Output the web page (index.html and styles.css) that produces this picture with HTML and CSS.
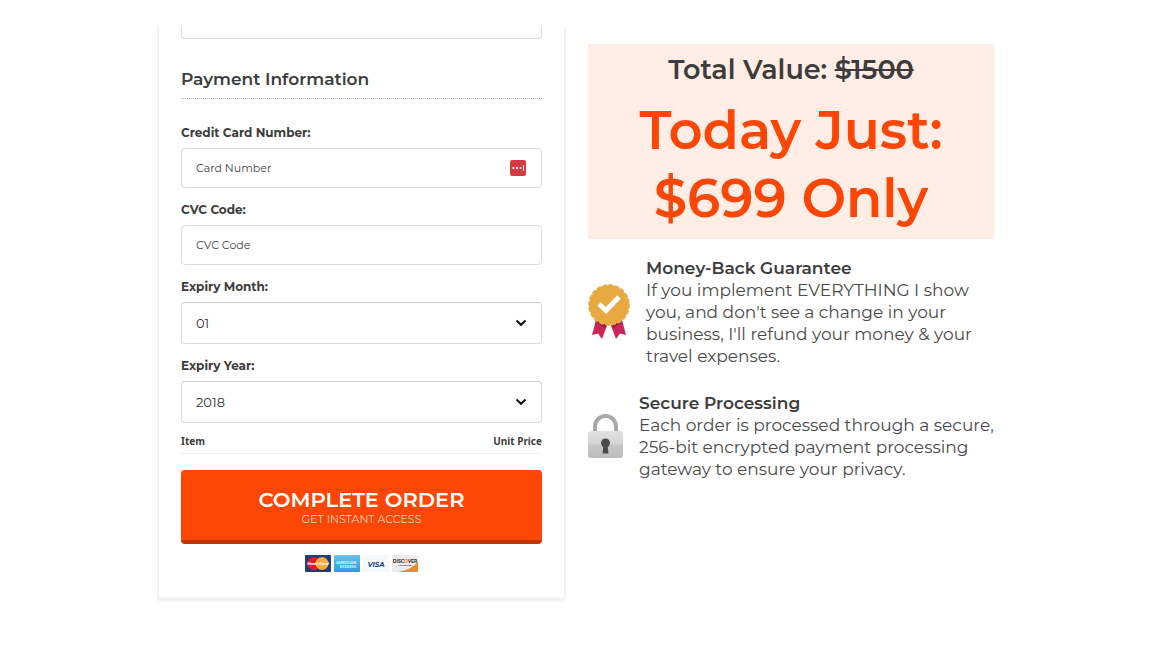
FILE: index.html
```html
<!DOCTYPE html>
<html lang="en">
  <head>
    <meta charset="UTF-8" />
    <meta name="viewport" content="width=device-width, initial-scale=1.0" />
    <title>Complete Order</title>
    <link rel="stylesheet" href="styles.css">
  </head>

  <body>
    <div class="container">
      <form class="card">
        <input type="text" class="prev_input" aria-label="Address" />
        <h2>Payment Information</h2>

        <div class="field">
          <label for="card">Credit Card Number:</label>
          <div class="control">
            <input type="text" id="card" placeholder="Card Number" />
            <svg class="pass_icon" viewBox="0 0 16 16">
              <rect width="16" height="16" rx="2" fill="#d33a42"/>
              <g fill="#fff">
                <circle cx="3.4" cy="8" r="1.1"/>
                <circle cx="7" cy="8" r="1.1"/>
                <circle cx="10.6" cy="8" r="1.1"/>
                <rect x="13" y="5" width="1" height="6"/>
              </g>
            </svg>
          </div>
        </div>

        <div class="field">
          <label for="cvc">CVC Code:</label>
          <input type="text" id="cvc" placeholder="CVC Code" />
        </div>

        <div class="field">
          <label for="month">Expiry Month:</label>
          <div class="control">
            <select id="month">
              <option>01</option>
              <option>02</option>
              <option>03</option>
            </select>
            <svg class="arrow" viewBox="0 0 12 8"><path d="M1.500 1.500L6 5.800L10.500 1.500" fill="none" stroke="#111" stroke-width="2"/></svg>
          </div>
        </div>

        <div class="field">
          <label for="year">Expiry Year:</label>
          <div class="control">
            <select id="year">
              <option>2018</option>
              <option>2019</option>
              <option>2020</option>
            </select>
            <svg class="arrow" viewBox="0 0 12 8"><path d="M1.500 1.500L6 5.800L10.500 1.500" fill="none" stroke="#111" stroke-width="2"/></svg>
          </div>
        </div>

        <table class="items">
          <tr>
            <th>Item</th>
            <th class="price">Unit Price</th>
          </tr>
        </table>

        <button type="submit" class="orderBtn">
          <span class="main">COMPLETE ORDER</span>
          <span class="sub">GET INSTANT ACCESS</span>
        </button>

        <div class="cards">
          <!-- mastercard -->
          <svg viewBox="0 0 26 17">
            <rect width="26" height="17" rx="1" fill="#253a78"/>
            <circle cx="9" cy="8.500" r="6.500" fill="#e01b2c"/>
            <circle cx="17" cy="8.500" r="6.500" fill="#f3ad3d"/>
            <text x="13" y="10" font-size="3.500" font-weight="700" font-style="italic" fill="#fff" text-anchor="middle">MasterCard</text>
          </svg>
          <!-- amex -->
          <svg viewBox="0 0 26 17">
            <defs>
              <linearGradient id="amex" x1="0" y1="0" x2="0" y2="1">
                <stop offset="0" stop-color="#6cc3ee"/>
                <stop offset="1" stop-color="#2e9bd8"/>
              </linearGradient>
            </defs>
            <rect width="26" height="17" rx="1" fill="url(#amex)"/>
            <text x="12" y="8.500" font-size="3.500" font-weight="700" fill="#d9f1fc" text-anchor="middle">AMERICAN</text>
            <text x="14" y="12.500" font-size="3.500" font-weight="700" fill="#d9f1fc" text-anchor="middle">EXPRESS</text>
          </svg>
          <!-- visa -->
          <svg viewBox="0 0 26 17">
            <rect width="26" height="17" rx="1" fill="#f6f9fc"/>
            <text x="13" y="11.500" font-size="7" font-weight="700" font-style="italic" fill="#1f4583" text-anchor="middle">VISA</text>
          </svg>
          <!-- discover -->
          <svg viewBox="0 0 26 17">
            <rect width="26" height="17" rx="1" fill="#ececec"/>
            <path d="M26 6.500C22 12 15 15.500 6 17H25q1 0 1-1Z" fill="#ef8a2c"/>
            <text x="13" y="7.500" font-size="4.500" font-weight="700" fill="#333" text-anchor="middle">DISC<tspan fill="#ef6a2c">O</tspan>VER</text>
            <text x="13" y="11" font-size="2.500" font-weight="700" fill="#444" text-anchor="middle">NETWORK</text>
          </svg>
        </div>
      </form>

      <div class="side">
        <div class="offer">
          <p class="total">Total Value: <del>$1500</del></p>
          <p class="today">Today Just:<br>$699 Only</p>
        </div>

        <div class="info">
          <svg class="badge" viewBox="0 0 42 56">
            <path d="M8 36L4 51L10 49.500L14 55L20 39Z" fill="#c92558"/>
            <path d="M34 36L38 51L32 49.500L28 55L22 39Z" fill="#c92558"/>
            <path d="M7 37L17 44L19 38ZM35 37L25 44L23 38Z" fill="#8f1b46"/>
            <circle cx="21" cy="21" r="19.500" fill="#e8a941"/>
            <circle cx="21" cy="21" r="19.300" fill="none" stroke="#e8a941" stroke-width="3" stroke-linecap="round" stroke-dasharray="2.500 3.563"/>
            <path d="M11 20L18 26.500L31 13" fill="none" stroke="#fff" stroke-width="5"/>
          </svg>
          <div class="text">
            <h3>Money-Back Guarantee</h3>
            <p>If you implement EVERYTHING I show<br>you, and don't see a change in your<br>business, I'll refund your money &amp; your<br>travel expenses.</p>
          </div>
        </div>

        <div class="info">
          <svg class="lock" viewBox="0 0 35 44">
            <defs>
              <linearGradient id="lockBody" x1="0" y1="0" x2="0" y2="1">
                <stop offset="0" stop-color="#e0e0e0"/>
                <stop offset=".45" stop-color="#d6d6d6"/>
                <stop offset=".55" stop-color="#c6c6c6"/>
                <stop offset="1" stop-color="#bdbdbd"/>
              </linearGradient>
            </defs>
            <path d="M7 18V12.500a10.500 10.500 0 0 1 21 0V18" fill="none" stroke="#a8a8a8" stroke-width="4"/>
            <rect y="17" width="35" height="27" rx="3" fill="url(#lockBody)"/>
            <circle cx="17.500" cy="29" r="4.500" fill="#4b4b4b"/>
            <path d="M15.500 31h4l1 8.500h-6Z" fill="#4b4b4b"/>
          </svg>
          <div class="text">
            <h3>Secure Processing</h3>
            <p>Each order is processed through a secure,<br>256-bit encrypted payment processing<br>gateway to ensure your privacy.</p>
          </div>
        </div>
      </div>
    </div>
  </body>
</html>
```

FILE: styles.css
```css
* {
  padding: 0;
  margin: 0;
  box-sizing: border-box;
}
body {
  background: #fff;
  color: #3c3c3c;
  font-family: Montserrat, Inter, sans-serif;
  padding: 27px 20px;
}
.container {
  max-width: 836px;
  margin: 0 auto;
  display: grid;
  grid-template-columns: minmax(0, 407px) 1fr;
  gap: 23px;
  align-items: start;
}

/* order form */
.card {
  padding: 0 22px 26px;
  border: 1px solid #eee;
  border-top: none;
  box-shadow: 0 2px 3px rgba(0, 0, 0, 0.07);
  clip-path: inset(0 -5px -8px -5px);
}
.card h2 {
  margin-top: 26px;
  margin-bottom: 23px;
  padding-bottom: 5px;
  font-size: 17px;
  line-height: 28px;
  font-weight: 600;
  border-bottom: 1px dotted #aaa;
}
.field {
  margin-bottom: 11px;
}
.field label {
  display: block;
  margin-bottom: 4px;
  font-size: 12px;
  line-height: 22px;
  font-weight: 700;
}
.control {
  position: relative;
}
input,
select {
  display: block;
  width: 100%;
  height: 40px;
  padding: 0 14px;
  color: #333;
  background: #fff;
  border: 1px solid #dcdcdc;
  border-radius: 4px;
  font-family: inherit;
  font-size: 11px;
  outline: none;
}
input::placeholder {
  color: #444;
  opacity: 1;
}
select {
  height: 42px;
  font-size: 13px;
  border-top-color: #ccc;
  appearance: none;
}
.prev_input {
  height: 12px;
  border-top: none;
  border-radius: 0 0 4px 4px;
}
.pass_icon {
  position: absolute;
  top: 12px;
  right: 16px;
  width: 16px;
  height: 16px;
}
.arrow {
  position: absolute;
  top: 17px;
  right: 15px;
  width: 12px;
  height: 8px;
  pointer-events: none;
}

.items {
  width: 100%;
  margin-top: -1px;
  border-collapse: collapse;
  border-bottom: 1px solid #eee;
  font-family: "Noto Sans", sans-serif;
  font-size: 10px;
  line-height: 16px;
}
.items th {
  padding-bottom: 4px;
  text-align: left;
}
.items .price {
  text-align: right;
}

.orderBtn {
  display: block;
  width: 100%;
  height: 74px;
  margin-top: 16px;
  padding-top: 4px;
  color: #fff;
  background: #fb4605;
  border: none;
  border-bottom: 4px solid #bf3604;
  border-radius: 4px;
  font-family: inherit;
  cursor: pointer;
}
.orderBtn span {
  display: block;
}
.orderBtn .main {
  font-size: 21px;
  line-height: 24px;
  font-weight: 600;
}
.orderBtn .sub {
  font-size: 11px;
  line-height: 14px;
  color: #ffd3c0;
}
.cards {
  display: flex;
  justify-content: center;
  gap: 3px;
  margin-top: 11px;
}
.cards svg {
  width: 26px;
  height: 17px;
}

/* right column */
.side {
  padding-top: 17px;
}
.offer {
  padding: 7px 0;
  margin-bottom: 18px;
  text-align: center;
  font-weight: 600;
  background: #ffede6;
}
.total {
  margin-bottom: 7px;
  font-size: 27px;
  line-height: 38px;
}
.today {
  font-size: 53px;
  line-height: 68px;
  color: #fb4605;
}
.info {
  display: flex;
  align-items: center;
  gap: 16px;
  margin-bottom: 25px;
}
.info svg {
  flex-shrink: 0;
}
.badge {
  width: 42px;
  height: 56px;
}
.lock {
  width: 35px;
  height: 44px;
}
.text {
  font-size: 17px;
  line-height: 22px;
  white-space: nowrap;
}
.text h3 {
  font-size: 17px;
  font-weight: 600;
}
.text p {
  color: #4a4a4a;
  font-weight: 400;
}

@media (max-width: 860px) {
  .container {
    grid-template-columns: 1fr;
  }
  .text {
    white-space: normal;
  }
}
```
